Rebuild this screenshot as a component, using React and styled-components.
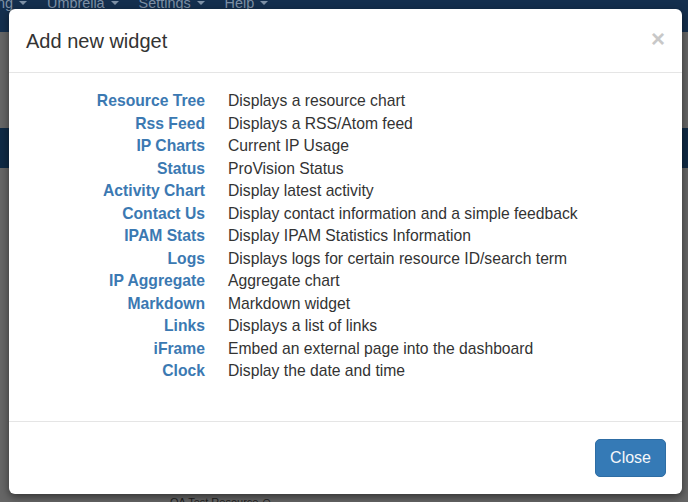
import styled, { createGlobalStyle } from 'styled-components';

const GlobalStyle = createGlobalStyle`
  html, body {
    margin: 0;
    padding: 0;
    background: #666;
    font-family: "Liberation Sans", Arial, sans-serif;
  }
`;

const Page = styled.div`
  position: relative;
  width: 688px;
  height: 502px;
  overflow: hidden;
  background: #666;
`;

const NavBar = styled.div`
  height: 32px;
  background: #142f4e;
  overflow: hidden;
`;

const NavList = styled.ul`
  display: flex;
  gap: 20px;
  margin: -6px 0 0 -3px;
  padding: 0;
  list-style: none;
`;

const NavItem = styled.li`
  color: #7e91a6;
  font-size: 14.4px;
  line-height: 18px;
  display: flex;
  align-items: center;
  gap: 6px;

  &::after {
    content: '';
    border-left: 4.5px solid transparent;
    border-right: 4.5px solid transparent;
    border-top: 4.5px solid #7e91a6;
  }
`;

const Band = styled.div`
  margin-top: 96px;
  height: 40px;
  background: #0f2a45;
`;

const Content = styled.div`
  padding: 328px 0 0 170px;
  color: #222;
  font-size: 11px;
`;

const Backdrop = styled.div`
  position: absolute;
  inset: 0;
`;

const Dialog = styled.div`
  position: absolute;
  top: 9px;
  left: 9px;
  width: 673px;
  height: 485px;
  background: #fff;
  border-radius: 6px;
  box-shadow: 0 3px 9px rgba(0, 0, 0, 0.5);
  display: flex;
  flex-direction: column;
`;

const Header = styled.div`
  display: flex;
  justify-content: space-between;
  align-items: flex-start;
  padding: 20px 17px 0 17px;
  height: 43px;
  border-bottom: 1px solid #e5e5e5;
`;

const Title = styled.h4`
  margin: 0;
  font-size: 20px;
  font-weight: normal;
  line-height: 24px;
  color: #333;
`;

const CloseX = styled.button`
  border: none;
  background: none;
  padding: 0;
  margin-top: -2px;
  font-family: "Liberation Sans", Arial, sans-serif;
  font-size: 24px;
  font-weight: bold;
  line-height: 24px;
  color: #c8c8c8;
  cursor: pointer;
`;

const Body = styled.div`
  flex: 1;
  padding: 17px 15px 0 15px;
  border-bottom: 1px solid #e5e5e5;
`;

const WidgetGrid = styled.dl`
  display: grid;
  grid-template-columns: 181px 1fr;
  column-gap: 23px;
  margin: 0;
  font-size: 15.7px;
  line-height: 22.5px;
`;

const Name = styled.dt`
  text-align: right;
  font-weight: bold;
  color: #3b79b2;
`;

const Desc = styled.dd`
  margin: 0;
  color: #333;
`;

const Footer = styled.div`
  display: flex;
  justify-content: flex-end;
  padding: 17px 16px 17px;
`;

const Button = styled.button`
  height: 38px;
  padding: 0 14px;
  font-family: "Liberation Sans", Arial, sans-serif;
  font-size: 16px;
  color: #f4f7fa;
  background: #357ab6;
  border: 1px solid #2e6da4;
  border-radius: 5px;
  cursor: pointer;
`;

const widgets = [
  ['Resource Tree', 'Displays a resource chart'],
  ['Rss Feed', 'Displays a RSS/Atom feed'],
  ['IP Charts', 'Current IP Usage'],
  ['Status', 'ProVision Status'],
  ['Activity Chart', 'Display latest activity'],
  ['Contact Us', 'Display contact information and a simple feedback'],
  ['IPAM Stats', 'Display IPAM Statistics Information'],
  ['Logs', 'Displays logs for certain resource ID/search term'],
  ['IP Aggregate', 'Aggregate chart'],
  ['Markdown', 'Markdown widget'],
  ['Links', 'Displays a list of links'],
  ['iFrame', 'Embed an external page into the dashboard'],
  ['Clock', 'Display the date and time'],
];

export default function App() {
  return (
    <Page>
      <GlobalStyle />
      <NavBar>
        <NavList>
          <NavItem>ng</NavItem>
          <NavItem>Umbrella</NavItem>
          <NavItem>Settings</NavItem>
          <NavItem>Help</NavItem>
        </NavList>
      </NavBar>
      <Band />
      <Content>QA Test Resource ⊙</Content>
      <Backdrop>
        <Dialog>
          <Header>
            <Title>Add new widget</Title>
            <CloseX>×</CloseX>
          </Header>
          <Body>
            <WidgetGrid>
              {widgets.map(([name, desc]) => (
                <>
                  <Name key={name}>{name}</Name>
                  <Desc key={name + '-d'}>{desc}</Desc>
                </>
              ))}
            </WidgetGrid>
          </Body>
          <Footer>
            <Button>Close</Button>
          </Footer>
        </Dialog>
      </Backdrop>
    </Page>
  );
}
